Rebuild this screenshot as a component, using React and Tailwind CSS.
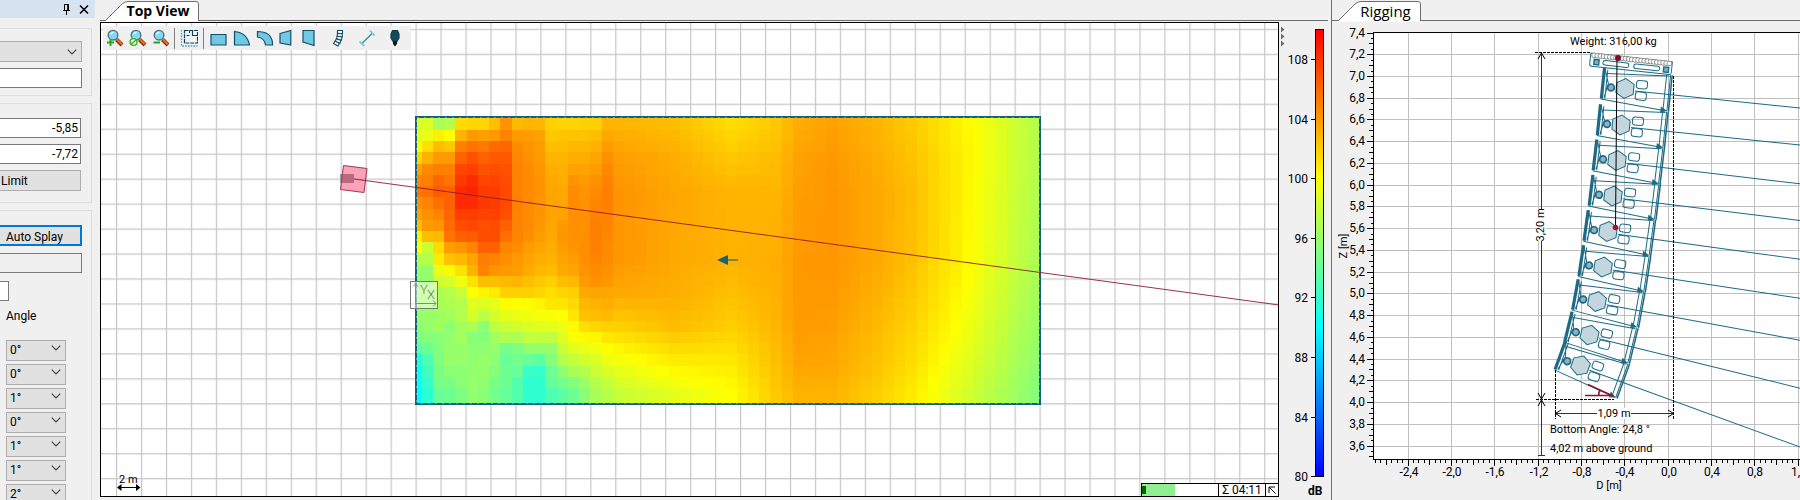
import React from "react";

/* ---------- shared helpers ---------- */

const INK = "#15607a";
const STEEL = "#1d6a84";

function range(n) {
  return Array.from({ length: n }, (_, i) => i);
}

/* Level (dB) to colour: 80 blue, 90 cyan, 100 yellow, 110 red. */
function levelColor(db) {
  const v = Math.max(80, Math.min(110, db));
  if (v >= 100) return `rgb(255,${Math.round((110 - v) * 25.5)},0)`;
  if (v >= 90) {
    const r = Math.round((v - 90) * 25.5);
    return `rgb(${r},255,${255 - r})`;
  }
  return `rgb(0,${Math.round((v - 80) * 25.5)},255)`;
}

/* ---------- left panel ---------- */

function Chevron() {
  return (
    <svg viewBox="0 0 10 6" className="pointer-events-none absolute right-[5px] top-1/2 h-[6px] w-[10px] -translate-y-1/2">
      <path d="M0.7 0.7 L5 5 L9.3 0.7" fill="none" stroke="#444" strokeWidth="1.1" />
    </svg>
  );
}

function AngleSelect({ value, index }) {
  return (
    <div className="relative h-[21px] w-[60px] shrink-0">
      <select
        aria-label={`Angle ${index + 1}`}
        defaultValue={value}
        className="h-full w-full appearance-none border border-[#adadad] bg-[#e1e1e1] pl-[3px] text-[12px] leading-[18px] text-black outline-none"
      >
        <option>0°</option>
        <option>1°</option>
        <option>2°</option>
      </select>
      <Chevron />
    </div>
  );
}

const ANGLES = ["0°", "0°", "1°", "0°", "1°", "1°", "2°"];

function PropertiesPanel() {
  return (
    <aside className="flex w-[100px] shrink-0 flex-col overflow-hidden">
      <header className="flex h-[18px] w-[95px] shrink-0 items-center justify-end gap-[8px] bg-[#d6e3f1] pr-[6px]">
        <button aria-label="Pin" className="h-[12px] w-[9px]">
          <svg viewBox="0 0 9 12" className="h-[12px] w-[9px]">
            <path d="M2.5 1.5H6.5V7M2.5 1.5V7M5.7 1.5V7M1 7.5H8M4.5 8V12" fill="none" stroke="#000" strokeWidth="1" />
          </svg>
        </button>
        <button aria-label="Close" className="h-[9px] w-[10px]">
          <svg viewBox="0 0 10 9" className="h-[9px] w-[10px]">
            <path d="M1 0.5L9 8.5M9 0.5L1 8.5" stroke="#000" strokeWidth="1.5" />
          </svg>
        </button>
      </header>

      <section className="mt-[10px] flex h-[68px] w-[92px] shrink-0 flex-col gap-[6px] border border-l-0 border-[#dcdcdc] pt-[12px]">
        <div className="relative h-[21px] w-[82px] shrink-0">
          <select aria-label="Type" className="h-full w-full appearance-none border border-l-0 border-[#adadad] bg-[#e1e1e1] outline-none">
            <option></option>
          </select>
          <Chevron />
        </div>
        <input aria-label="Name" className="h-[20px] w-[82px] shrink-0 border border-l-0 border-[#7a7a7a] bg-white px-[2px] text-[12px] outline-none" />
      </section>

      <section className="mt-[7px] flex h-[100px] w-[92px] shrink-0 flex-col gap-[6px] border border-l-0 border-[#dcdcdc] pt-[14px]">
        <input aria-label="Upper limit" defaultValue="-5,85" className="h-[20px] w-[81px] shrink-0 border border-l-0 border-[#7a7a7a] bg-white px-[2px] text-right text-[12px] outline-none" />
        <input aria-label="Lower limit" defaultValue="-7,72" className="h-[20px] w-[81px] shrink-0 border border-l-0 border-[#7a7a7a] bg-white px-[2px] text-right text-[12px] outline-none" />
        <button className="h-[21px] w-[81px] shrink-0 border border-l-0 border-[#adadad] bg-[#e1e1e1] pl-px pt-px text-left text-[12px]">Limit</button>
      </section>

      <section className="mt-[7px] flex w-[92px] flex-1 flex-col overflow-hidden border border-b-0 border-l-0 border-[#dcdcdc] pt-[14px]">
        <button className="h-[21px] w-[82px] shrink-0 border-2 border-l-0 border-[#0078d7] bg-[#e1e1e1] pl-[6px] pt-[3px] text-left text-[12px] leading-[14px]">Auto Splay</button>
        <input aria-label="Splay status" readOnly className="mt-[7px] h-[20px] w-[82px] shrink-0 border border-l-0 border-[#7a7a7a] bg-[#f0f0f0] outline-none" />
        <input aria-label="Count" className="mt-[8px] h-[20px] w-[9px] shrink-0 border border-l-0 border-[#7a7a7a] bg-white outline-none" />
        <h2 className="mt-[7px] pl-[6px] text-[12px] leading-[16px]">Angle</h2>
        <div className="mt-[13px] flex flex-col gap-[3px] pl-[6px]">
          {ANGLES.map((a, i) => (
            <AngleSelect key={i} value={a} index={i} />
          ))}
        </div>
      </section>
    </aside>
  );
}

/* ---------- tabs ---------- */

function Tab({ children, width, className }) {
  return (
    <button className={`relative z-10 h-[22px] shrink-0 ${className}`}>
      <svg viewBox={`0 0 ${width} 22`} className="absolute inset-0 h-full w-full">
        <path d={`M0 21.5 L17 4 Q20 1.5 23 1.5 H${width - 3} Q${width - 0.5} 1.5 ${width - 0.5} 4 V21.5 Z`} fill="#fff" />
        <path d={`M0.5 20.5 L17 4 Q20 1.5 23 1.5 H${width - 3} Q${width - 0.5} 1.5 ${width - 0.5} 4 V21`} fill="none" stroke="#6d6d6d" />
      </svg>
      <span className="relative">{children}</span>
    </button>
  );
}

/* ---------- toolbar ---------- */

function Magnifier({ mark }) {
  return (
    <svg viewBox="0 0 18 18" className="h-[18px] w-[18px]">
      <path d="M10.5 10.5 L16 16" stroke="#7a3212" strokeWidth="4" />
      <path d="M10.8 10.3 L15.8 15.3" stroke="#ef6a1c" strokeWidth="2.2" />
      <circle cx="7" cy="6.2" r="4.8" fill="#7fdcf4" stroke="#4c7383" strokeWidth="1.4" />
      <path d="M4.3 5.5 Q5.2 3.3 7.6 3.3" fill="none" stroke="#e8fbff" strokeWidth="1.3" />
      {mark === "plus" && <path d="M1 13.5H8M4.5 10V17" stroke="#1fae10" strokeWidth="1.9" />}
      {mark === "minus" && <path d="M1.5 13.5H8" stroke="#1fae10" strokeWidth="2" />}
      {mark === "fit" && (
        <g fill="#eaffdf" stroke="#3dae28" strokeWidth="1.4">
          <circle cx="4.6" cy="13" r="3.4" />
          <path d="M2.3 15.3L7 10.7" />
        </g>
      )}
    </svg>
  );
}

function Shape({ children }) {
  return (
    <svg viewBox="0 0 18 18" className="h-[18px] w-[18px]" fill="#70c8e2" stroke="#15506a" strokeWidth="1.2">
      {children}
    </svg>
  );
}

const tool = "flex h-full w-[23px] shrink-0 items-center justify-center";

function Toolbar() {
  return (
    <div role="toolbar" className="absolute left-[2px] top-[3px] flex h-[24px] items-center bg-[#f0f0f0] pr-[5px]">
      <button aria-label="Zoom in" className={tool}><Magnifier mark="plus" /></button>
      <button aria-label="Zoom fit" className={tool}><Magnifier mark="fit" /></button>
      <button aria-label="Zoom out" className={tool}><Magnifier mark="minus" /></button>
      <span className="mx-[2px] h-[21px] w-px bg-[#808080]" />
      <button aria-label="Room plan" className={tool}>
        <Shape>
          <path d="M4.5 1.5H17.5V14H4.5Z" fill="#eef6f9" stroke="#143f50" strokeDasharray="4 0.8" />
          <path d="M9.5 1.5V4M9.5 6.5H6.5M12.5 2V6.5H17" fill="none" stroke="#143f50" />
          <path d="M1.5 1V17H17.5" fill="none" stroke="#4aa5c2" strokeWidth="1.4" strokeDasharray="1.6 1.2" />
        </Shape>
      </button>
      <span className="mx-[3px] h-[21px] w-px bg-[#808080]" />
      <button aria-label="Rectangle" className={tool}><Shape><path d="M1 5.5H16V16H1Z" /></Shape></button>
      <button aria-label="Quarter circle" className={tool}><Shape><path d="M1.5 2.5Q14 3.5 16.5 16H1.5Z" /></Shape></button>
      <button aria-label="Ring segment" className={tool}><Shape><path d="M1.5 2.5Q15 2.5 16.5 13.5V16H9.5Q8.5 9 1.5 8Z" /></Shape></button>
      <button aria-label="Trapezoid left" className={tool}><Shape><path d="M1 4.5L11.8 1.5V16L1 14Z" /></Shape></button>
      <button aria-label="Trapezoid right" className={tool}><Shape><path d="M1 1.5H12V16.5L1 13Z" /></Shape></button>
      <button aria-label="Line array" className="ml-[5px] flex h-full w-[23px] items-center justify-center">
        <Shape>
          <g fill="#fff" strokeWidth="1.1">
            <rect x="7.5" y="1.5" width="5" height="3" />
            <rect x="7.3" y="4.5" width="5" height="3" transform="rotate(4 10 6)" />
            <rect x="6.8" y="7.5" width="5" height="3" transform="rotate(12 9 9)" />
            <rect x="5.6" y="10.4" width="5" height="3" transform="rotate(20 8 12)" />
            <rect x="4" y="13" width="5" height="3" transform="rotate(30 6.5 14.5)" />
          </g>
        </Shape>
      </button>
      <button aria-label="Measure" className="ml-[5px] flex h-full w-[23px] items-center justify-center">
        <Shape>
          <path d="M4 14.5L14.5 4" fill="none" stroke="#3e8ca8" strokeWidth="1.5" />
          <path d="M1.5 12.5L6.5 17M12 1.5L16.5 6.5" fill="none" stroke="#7fc7de" strokeWidth="1.8" />
        </Shape>
      </button>
      <button aria-label="Loudspeaker" className="ml-[5px] flex h-full w-[23px] items-center justify-center">
        <Shape>
          <path d="M6.5 1.5H11.5L13 5V9L10.5 13H7.5L5 9V5Z" fill="#124a5e" stroke="#0d3b4c" />
          <path d="M7.5 13H10.5V14.5L9 16.5L7.5 14.5Z" fill="#111" stroke="#111" />
        </Shape>
      </button>
    </div>
  );
}

/* ---------- level map ---------- */

/* Near field, one value for each cell. */
const NEAR = [
  [98.5, 98.5, 96.6, 97, 101.4, 101.6, 101.6, 102.5, 104.2, 102.7, 102.9, 102.8, 101.8, 101.7, 101.7, 101.8, 101.9, 102.9],
  [99, 99.2, 100.5, 100, 103, 104, 103.8, 104, 104.9, 104, 103.9, 103.7, 102.1, 102.3, 102.4, 102.4, 102.6, 103.4],
  [99.6, 101.2, 102.6, 102.2, 105, 105.5, 105.3, 105.8, 106, 104.5, 104.2, 103.9, 102.5, 102.6, 102.8, 102.8, 103, 103.9],
  [101.6, 103, 104, 104, 106.2, 106.8, 106.2, 106.5, 106.5, 104.7, 104.3, 104, 102.9, 102.9, 103.2, 103.2, 103.5, 104.3],
  [103.7, 104.6, 105, 105, 107.3, 107.5, 106.8, 107, 106.8, 104.9, 104.5, 104.1, 103.2, 103.1, 103.7, 103.6, 103.9, 104.7],
  [104.8, 105, 106, 105.5, 107.8, 108.3, 107.3, 107.4, 107, 104.9, 104.6, 104.2, 103.4, 103.2, 104.2, 104, 104.3, 104.9],
  [105.4, 105.6, 106.4, 106.2, 108.3, 108.6, 107.7, 107.7, 107.1, 104.9, 104.6, 104.3, 103.5, 103.4, 104.5, 104.2, 104.6, 105],
  [104.4, 104.8, 105.6, 106.2, 108.4, 108.3, 107.8, 107.7, 107.1, 105, 104.6, 104.2, 103.6, 103.5, 104.5, 104.3, 104.8, 105],
  [103.7, 104.3, 104.8, 106, 107.6, 107.6, 107.4, 107.5, 106.9, 104.9, 104.5, 104.2, 103.6, 103.6, 104.3, 104.3, 104.9, 104.9],
  [102.6, 104, 104.1, 105.9, 107, 107.2, 106.9, 107, 106.2, 104.9, 104.5, 104.1, 103.5, 104, 104.3, 104.3, 105, 104.8],
  [100.5, 102.6, 102.7, 105.5, 106.2, 106.4, 107, 107, 105.6, 104.8, 104.4, 103.9, 103.4, 104.1, 104.3, 104.4, 105, 104.7],
  [100, 98, 101.4, 103.9, 104.2, 104.8, 106.2, 106.2, 104.8, 104.5, 103.9, 103.6, 103.2, 103.9, 104.2, 104.4, 105, 104.6],
  [97.2, 97, 100.8, 102.4, 102.8, 103.6, 105.1, 104.9, 104.4, 104, 103.6, 103.2, 103, 103.6, 103.9, 104.4, 104.8, 104.5],
  [96, 95.8, 99.2, 100.2, 101.1, 103, 104.9, 104.2, 104, 103.9, 103.3, 102.8, 102.6, 103.4, 103.6, 104.2, 104.5, 104.3],
  [96, 95.8, 98, 98.4, 99.4, 101.1, 102.6, 102.6, 102.7, 102.9, 102.5, 102.2, 101.9, 102.6, 102.8, 104, 104.3, 104.1],
  [96.4, 96.5, 96.8, 97, 97.9, 100, 100.4, 100.8, 101.8, 101.8, 101.9, 101.6, 101.3, 101.7, 101.9, 103.4, 103.5, 103.5],
  [96.2, 96.2, 96.6, 96.8, 97.1, 98.8, 98.8, 99, 100.1, 100, 100.1, 100.4, 100.9, 101, 101.5, 102.8, 103, 103.2],
  [95.9, 96, 96.2, 96.4, 97, 98.3, 97.4, 98.4, 99, 99.2, 99.4, 99.7, 99.8, 100, 101, 102.4, 102.6, 102.7],
  [95.4, 95.8, 96.4, 95.5, 96.4, 96.8, 95.5, 97.4, 98, 98.2, 98.6, 98.8, 98.9, 99.3, 100.2, 101.3, 101.6, 101.8],
  [94.8, 95.2, 95.3, 95.7, 96.3, 95.3, 95.1, 96.4, 96.9, 96.8, 97.6, 97.6, 97.5, 98.7, 99.8, 100.2, 100.3, 100.9],
  [93.5, 94.2, 95.1, 95.9, 95.9, 95.5, 95.6, 95.9, 94.6, 94.9, 95.8, 95.8, 95.9, 97.9, 98.8, 99.2, 99.5, 100],
  [91.2, 93, 95, 95.9, 95.9, 95.6, 95.9, 95.6, 94.1, 94.5, 94, 93.6, 95.2, 97, 97.7, 98.2, 98.6, 99.4],
  [90.5, 92.5, 94.8, 95.4, 95.5, 95.7, 95.8, 95.2, 94.3, 94, 92.2, 92, 94.2, 95.6, 96.6, 97, 98, 98.6],
  [90.2, 92, 94.8, 94.8, 95.4, 95.8, 95.6, 94.8, 94.2, 93.2, 91.8, 91.8, 94, 94.5, 95.2, 96, 97, 97.6],
  [90.1, 91.7, 94, 94.3, 94.9, 95.7, 95.4, 94.5, 94, 93.3, 91.8, 91.8, 93, 93.6, 94.3, 95.4, 96.6, 97.2],
];

/* Far field, interpolated between these rows and columns. */
const FAR_COLS = [18, 23, 28, 32, 34, 37, 41, 44, 46, 48, 50, 53, 56];
const FAR_ROWS = [0, 3, 6, 12, 15, 18, 21, 24];
const FAR = [
  [102.9, 102.6, 101.3, 102.2, 103.2, 103.7, 102.9, 102.1, 101.4, 100.6, 99.8, 98.2, 96.6],
  [103.8, 103.2, 102.2, 102.6, 103.6, 104, 103.2, 102.4, 101.6, 100.8, 99.9, 98.2, 96.6],
  [104.2, 103.5, 102.9, 102.9, 103.8, 104.1, 103.4, 102.6, 101.7, 100.8, 99.8, 98.1, 96.5],
  [104.1, 103.4, 103, 103.2, 104, 104.1, 103.4, 102.5, 101.6, 100.7, 99.6, 97.9, 96.3],
  [103.4, 103.2, 102.5, 103.1, 104, 104, 103.1, 102.2, 101.3, 100.4, 99.3, 97.6, 96],
  [101.8, 102.6, 101.9, 102.9, 103.9, 103.8, 102.7, 101.8, 100.9, 100, 98.9, 97.2, 95.7],
  [99.6, 100.8, 100.9, 102.5, 103.6, 103.5, 102.4, 101.4, 100.4, 99.4, 98.4, 96.8, 95.3],
  [97.8, 99, 100, 102.1, 103, 103, 101.9, 100.8, 99.8, 98.8, 97.8, 96.3, 94.8],
];

function bracket(list, v) {
  let i = 0;
  while (i < list.length - 2 && v > list[i + 1]) i++;
  return [i, (v - list[i]) / (list[i + 1] - list[i])];
}

function levelAt(row, col) {
  if (col < 18) return NEAR[row][col];
  const [i, u] = bracket(FAR_COLS, col);
  const [j, w] = bracket(FAR_ROWS, row);
  const top = FAR[j][i] * (1 - u) + FAR[j][i + 1] * u;
  const bottom = FAR[j + 1][i] * (1 - u) + FAR[j + 1][i + 1] * u;
  return top * (1 - w) + bottom * w;
}

const MAP = { left: 416, top: 117, right: 1040, bottom: 403 };
const colEdge = (c) => (c === 0 ? MAP.left : Math.min(MAP.right, Math.round(421.6 + 11.25 * (c - 1))));
const rowEdge = (r) => (r === 0 ? MAP.top : r === 25 ? MAP.bottom : Math.round(130 + 11.22 * (r - 1)));

function LevelMap() {
  return (
    <g shapeRendering="crispEdges">
      {range(25).map((r) =>
        range(56).map((c) => (
          <rect
            key={`${r}-${c}`}
            x={colEdge(c)}
            y={rowEdge(r)}
            width={Math.max(0, colEdge(c + 1) - colEdge(c))}
            height={rowEdge(r + 1) - rowEdge(r)}
            fill={levelColor(levelAt(r, c))}
          />
        ))
      )}
      <rect x="416" y="116.5" width="624" height="287" fill="none" stroke="#14607c" strokeWidth="2" />
      <rect x="416.5" y="117" width="623" height="286" fill="none" stroke="#5f9c86" strokeWidth="1" strokeDasharray="2 5" />
    </g>
  );
}

function TopViewCanvas() {
  return (
    <svg className="absolute inset-0 h-full w-full" role="img" aria-label="Top view level map">
      <defs>
        <pattern id="grid" patternUnits="userSpaceOnUse" x="116" y="28.8" width="24.96" height="24.96">
          <path d="M0.6 0V24.96M0 0.6H24.96" stroke="#c6c6c6" strokeWidth="1.2" />
        </pattern>
      </defs>
      <g transform="translate(-101 -23)">
        <rect x="101" y="23" width="4000" height="3000" fill="url(#grid)" />
        <LevelMap />
        <rect x="340" y="174" width="14" height="9" fill="#999" />
        <path d="M343.5 165.5L367 168.5L364 192.5L340.5 189.5Z" fill="#f7577f" fillOpacity="0.55" stroke="#a83258" />
        <rect x="341" y="174" width="13" height="9" fill="#a05070" fillOpacity="0.35" />
        <path d="M354 179L1279 305" stroke="#8d1a36" strokeWidth="0.9" />
        <path d="M717 260L728 255V265Z" fill={INK} />
        <path d="M728 260H738" stroke={INK} strokeOpacity="0.7" strokeWidth="1.6" />
        <rect x="410.5" y="281.5" width="27" height="27" fill="#fff" fillOpacity="0.5" stroke="#777" />
        <g fill="none" stroke="#7c8f86" strokeWidth="1">
          <path d="M415.5 303.5V284M413 286.5L415.5 284L418 286.5M415.5 303.5H436M433 300.5L436 303.5L433 306.5" />
        </g>
        <text x="420" y="294" fontSize="13" fontWeight="300" fill="#66756c">Y</text>
        <text x="427" y="299" fontSize="13" fontWeight="300" fill="#66756c">X</text>
        <text x="119" y="483" fontSize="11">2 m</text>
        <path d="M118 487.5H139" stroke="#000" />
        <path d="M117 487.5L121.5 484V491ZM140.5 487.5L136 484V491Z" />
      </g>
    </svg>
  );
}

function StatusBox() {
  return (
    <div className="absolute bottom-0 right-0 flex h-[13px] border-l border-t border-black bg-white">
      <div role="progressbar" aria-label="Progress" className="flex w-[76px] items-stretch">
        <div className="flex w-[33px] items-center bg-[#90ee90]">
          <span className="h-[8px] w-[4px] bg-[#006400]" />
        </div>
      </div>
      <div className="w-[47px] border-l border-black text-center text-[12px] leading-[13px]">Σ 04:11</div>
      <button aria-label="Expand" className="flex w-[13px] items-center justify-center border-l border-black">
        <svg viewBox="0 0 8 8" className="h-[8px] w-[8px]">
          <path d="M1 7V1H7M1 1L7.5 7.5" fill="none" stroke="#000" />
        </svg>
      </button>
    </div>
  );
}

function ColorScale() {
  return (
    <svg className="h-full w-[52px] shrink-0" role="img" aria-label="Level scale in dB">
      <defs>
        <linearGradient id="levels" x1="0" y1="0" x2="0" y2="1">
          <stop offset="0" stopColor="#f00" />
          <stop offset="0.3333" stopColor="#ff0" />
          <stop offset="0.6667" stopColor="#0ff" />
          <stop offset="1" stopColor="#00f" />
        </linearGradient>
      </defs>
      <path d="M2 4.5V10.5L5.5 7.5ZM2 11.5V17.5L5.5 14.5ZM2 18.5V24.5L5.5 21.5Z" fill="#6d6d6d" />
      <rect x="36.5" y="7.5" width="8" height="447" fill="url(#levels)" stroke="#000" />
      {[108, 104, 100, 96, 92, 88, 84, 80].map((v, i) => {
        const y = Math.round(37 + i * 59.6);
        return (
          <g key={v}>
            <path d={`M32 ${y + 0.5}H36`} stroke="#000" />
            <text x="29" y={y + 5} fontSize="12" textAnchor="end">{v}</text>
          </g>
        );
      })}
      <text x="29" y="473" fontSize="12" fontWeight="700">dB</text>
    </svg>
  );
}

/* ---------- rigging plot ---------- */

const px = (d) => 1668.7 + d * 108.4;
const py = (z) => 32.5 + (7.4 - z) * 108.7;
const comma = (n) => (Math.abs(n) < 0.01 ? "0,0" : n.toFixed(1).replace(".", ","));

const CABINETS = [
  [1625, 88.5, 5.9],
  [1621, 125, 5.9],
  [1617, 160.5, 6.8],
  [1613, 196, 7],
  [1608, 231.5, 7.8],
  [1603, 267, 8.6],
  [1597, 301.5, 10.4],
  [1589.5, 335, 13.8],
  [1580.5, 365.5, 20],
];

function Cabinet({ x, y, angle }) {
  return (
    <g transform={`translate(${x} ${y}) rotate(${angle})`} fill="none" stroke={STEEL} strokeWidth="1">
      <path d="M-20 -13L43 -17M-23 13L42 18" />
      <path d="M40 -18V18M44 -18V18" />
      <path d="M45.6 -18V18.5" strokeWidth="1.5" />
      <path d="M-22.5 -18.5V12.5" strokeWidth="3.2" />
      <path d="M-19 -17V12M-22 -18L-17 -3L-20 11" />
      <path d="M38 15L43 18L38 19.5Z" fill={STEEL} />
      <circle cx="-14" cy="0.5" r="3.4" fill="#8fb3c0" strokeWidth="1.7" />
      <path d="M0 -10L8.7 -5V5L0 10L-8.7 5V-5Z" fill="#c3d6de" />
      <rect x="11" y="-9.5" width="11" height="8" rx="2.5" />
      <rect x="11" y="2" width="11" height="8" rx="2.5" />
      <path d="M10 1.5H300" />
    </g>
  );
}

function Frame() {
  return (
    <g transform="translate(1591 52) rotate(6.2)" fill="none" stroke={STEEL} strokeWidth="1">
      <path d="M0 1V12Q0 14 2 14H80Q82 14 82 12V1Z" fill="#fff" />
      <rect x="4" y="7" width="5" height="5" fill="#7fb0c2" strokeWidth="1.4" />
      <rect x="74" y="7" width="5" height="5" fill="#7fb0c2" strokeWidth="1.4" />
      <rect x="13" y="7" width="26" height="4.5" rx="2.2" />
      <rect x="44" y="7" width="26" height="4.5" rx="2.2" />
      {range(25).map((i) => (
        <circle key={i} cx={3.5 + i * 3.15} cy="3" r="2.4" fill="#fff" stroke="#888" strokeWidth="0.9" />
      ))}
    </g>
  );
}

function RiggingPlot() {
  return (
    <svg className="min-h-0 w-full flex-1" role="img" aria-label="Rigging side view">
      <g transform="translate(-1332 -22)">
        <rect x="1374" y="33" width="2000" height="427" fill="#fff" />
        <g shapeRendering="crispEdges">
          {range(10).map((i) => {
            const x = Math.round(px(-2.4 + i * 0.4)) - 0.5;
            return <path key={i} d={`M${x} 33V460`} stroke="#c0c0c0" />;
          })}
          {range(19).map((i) => {
            const y = Math.round(py(7.2 - i * 0.2)) + 0.5;
            return <path key={i} d={`M1374 ${y}H3000`} stroke="#c0c0c0" />;
          })}
          {range(79).map((i) => {
            const y = Math.round(py(7.4 - i * 0.05)) + 0.5;
            const len = i % 4 === 0 ? 6 : i % 2 === 0 ? 4 : 2;
            return <path key={i} d={`M${1373 - len} ${y}H1373`} stroke="#000" />;
          })}
          {range(79).map((i) => {
            const x = Math.round(px(-2.7 + i * 0.05)) - 0.5;
            const n = i - 6;
            const len = ((n % 8) + 8) % 8 === 0 ? 6 : n % 4 === 0 ? 5 : 3;
            return <path key={i} d={`M${x} 460V${460 + len}`} stroke="#000" />;
          })}
          <path d="M1373.5 32V460M1373 32.5H3000M1373 459.5H3000" stroke="#000" fill="none" />
        </g>

        <g fontSize="12">
          {range(20).map((i) => (
            <text key={i} x="1365" y={Math.round(py(7.4 - i * 0.2)) + 4} textAnchor="end">
              {comma(7.4 - i * 0.2)}
            </text>
          ))}
          {range(10).map((i) => (
            <text key={i} x={Math.round(px(-2.4 + i * 0.4))} y="476" textAnchor="middle">
              {comma(-2.4 + i * 0.4)}
            </text>
          ))}
        </g>
        <g fontSize="11">
          <text x="1609" y="489" textAnchor="middle">D [m]</text>
          <text transform="translate(1347 246) rotate(-90)" textAnchor="middle">Z [m]</text>
        </g>

        {CABINETS.map(([x, y, a]) => (
          <Cabinet key={y} x={x} y={y} angle={a} />
        ))}
        <Frame />

        <path d="M1588 384.5L1613 396M1585 395.5H1613M1600 390Q1598 393 1599 396" fill="none" stroke="#8a1533" strokeWidth="1.6" />
        <path d="M1617 58L1615.5 227" stroke="#000" />
        <circle cx="1618" cy="58" r="3" fill="#7c0f25" />
        <circle cx="1615.5" cy="227.5" r="2.8" fill="#a8132f" />

        <g fill="none" stroke="#000" strokeWidth="1">
          <path d="M1535 52.5H1591M1536 399.5H1614M1555.5 370V419M1673.5 76V419" strokeDasharray="3 1" />
          <path d="M1541.5 53V455M1538 455.5H1545M1555 413.5H1674" stroke="#333" />
          <path d="M1538 59L1541.5 53L1545 59M1538 393L1541.5 399L1545 393M1538 406L1541.5 400L1545 406M1561 410L1555.5 413.5L1561 417M1668 410L1673.5 413.5L1668 417" />
        </g>
        <rect x="1536" y="209" width="10" height="32" fill="#fff" />
        <rect x="1597" y="408" width="34" height="11" fill="#fff" />
        <g fontSize="11">
          <text transform="translate(1544 225) rotate(-90)" textAnchor="middle">3,20 m</text>
          <text x="1614" y="417" textAnchor="middle">1,09 m</text>
          <text x="1570" y="45">Weight: 316,00 kg</text>
          <text x="1550" y="433">Bottom Angle: 24,8 °</text>
          <text x="1550" y="452">4,02 m above ground</text>
        </g>
      </g>
    </svg>
  );
}

/* ---------- page ---------- */

export default function App() {
  return (
    <div className="flex h-screen overflow-hidden bg-[#f0f0f0] font-[Roboto,'Noto_Sans',sans-serif] text-black">
      <PropertiesPanel />

      <main className="flex min-w-0 flex-1 flex-col">
        <div className="mr-[3px] flex h-[21px] shrink-0 border-b border-[#6d6d6d] pl-[5px]">
          <Tab width={94} className="w-[94px] pl-[12px] font-['Open_Sans'] text-[14px] font-bold leading-[22px]">Top View</Tab>
        </div>
        <div className="mb-[3px] mt-px flex min-h-0 flex-1">
          <div className="relative min-w-0 flex-1 overflow-hidden border border-black bg-white">
            <TopViewCanvas />
            <Toolbar />
            <StatusBox />
          </div>
          <ColorScale />
        </div>
      </main>

      <section className="flex w-[469px] shrink-0 flex-col border-l border-[#6d6d6d]">
        <div className="flex h-[21px] shrink-0 border-b border-[#6d6d6d] pl-[6px]">
          <Tab width={83} className="w-[83px] pl-[12px] font-['Open_Sans'] text-[15px] leading-[22px]">Rigging</Tab>
        </div>
        <div className="mt-px flex min-h-0 flex-1 flex-col">
          <RiggingPlot />
        </div>
      </section>
    </div>
  );
}
